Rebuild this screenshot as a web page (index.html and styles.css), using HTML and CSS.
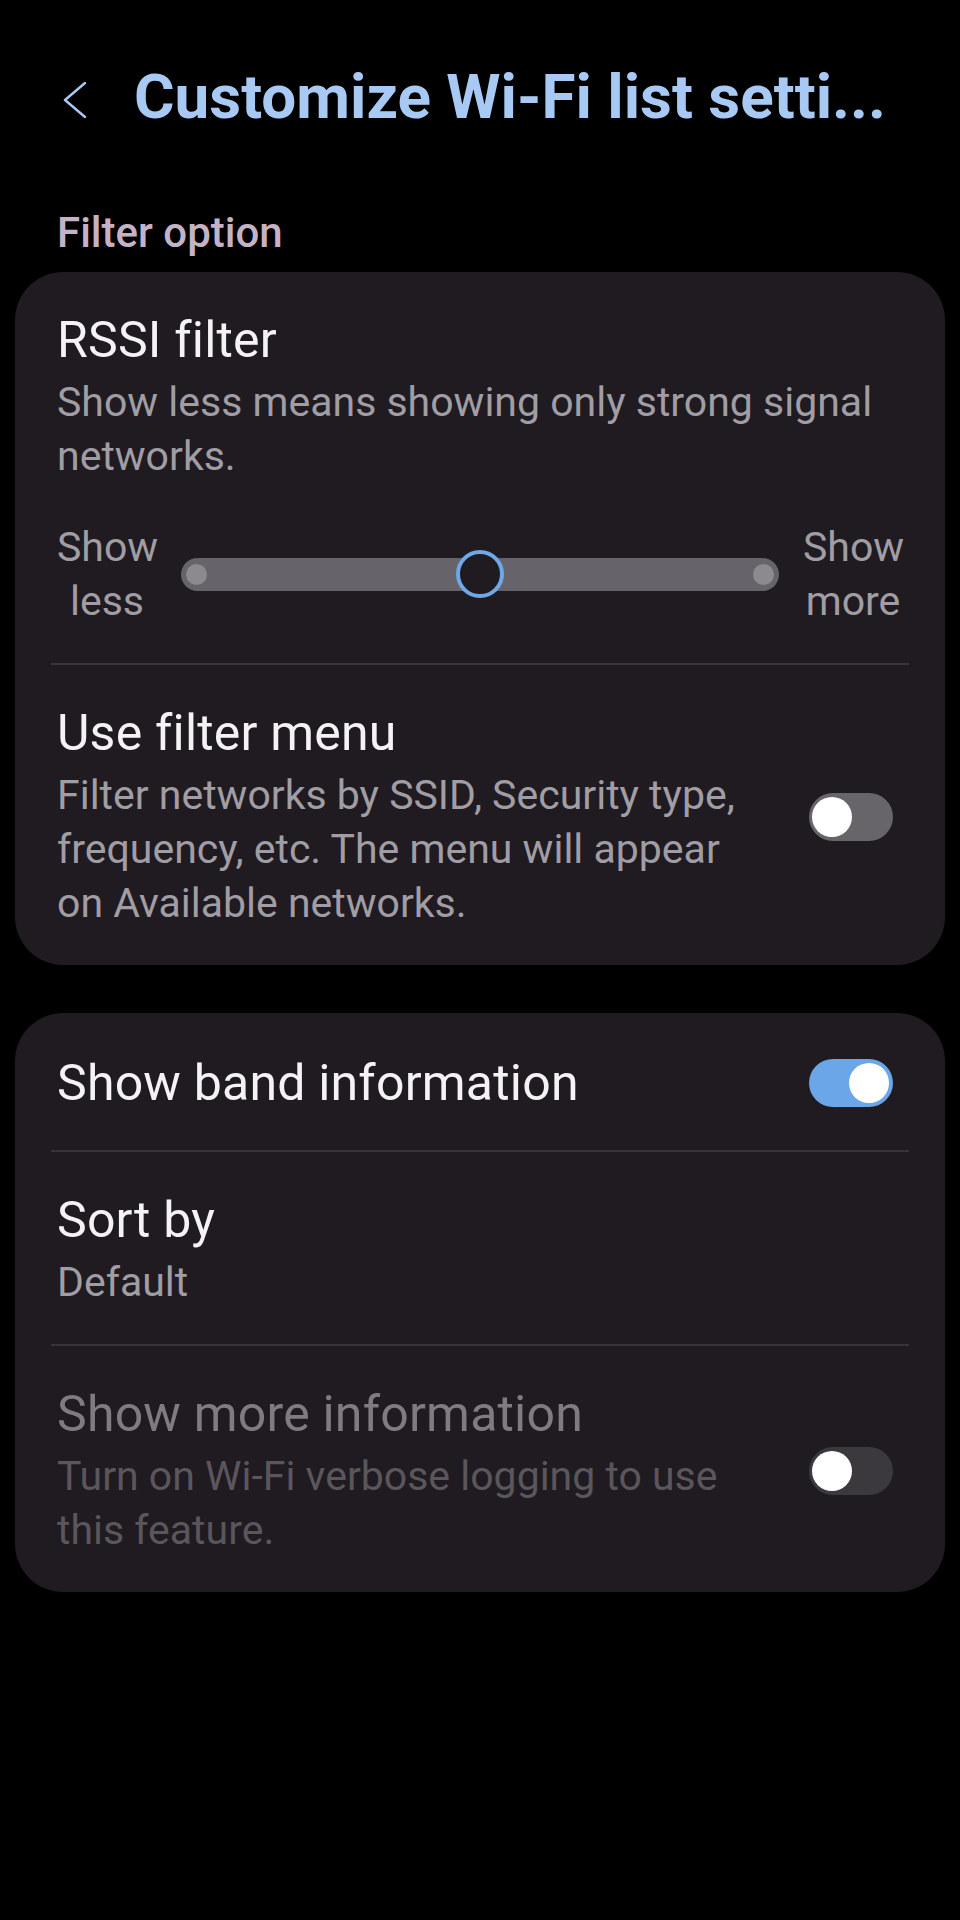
FILE: index.html
```html
<!DOCTYPE html>
<html lang="en">
  <head>
    <meta charset="utf-8" />
    <title>Customize Wi-Fi list settings</title>
    <link rel="stylesheet" href="styles.css">
  </head>

  <body>
    <div class="screen">
      <header class="appbar">
        <span class="back">
          <svg width="24" height="36" viewBox="0 0 24 36">
            <polyline points="22,1 2,18 22,35" fill="none" stroke="currentColor" stroke-width="2.4" stroke-linecap="round" stroke-linejoin="round" />
          </svg>
        </span>
        <h1 class="appbar-title">Customize Wi-Fi list setti...</h1>
      </header>

      <div class="section-label">Filter option</div>

      <div class="card">
        <div class="row">
          <div class="row-text">
            <div class="row-title">RSSI filter</div>
            <div class="row-summary">Show less means showing only strong signal networks.</div>
            <div class="slider">
              <div class="slider-label">Show less</div>
              <div class="slider-track">
                <span class="slider-dot start"></span>
                <span class="slider-dot end"></span>
                <span class="slider-thumb"></span>
              </div>
              <div class="slider-label">Show more</div>
            </div>
          </div>
        </div>

        <div class="row">
          <div class="row-text">
            <div class="row-title">Use filter menu</div>
            <div class="row-summary">Filter networks by SSID, Security type, frequency, etc. The menu will appear on Available networks.</div>
          </div>
          <span class="toggle"></span>
        </div>
      </div>

      <div class="card">
        <div class="row single">
          <div class="row-text">
            <div class="row-title">Show band information</div>
          </div>
          <span class="toggle on"></span>
        </div>

        <div class="row">
          <div class="row-text">
            <div class="row-title">Sort by</div>
            <div class="row-summary">Default</div>
          </div>
        </div>

        <div class="row disabled">
          <div class="row-text">
            <div class="row-title">Show more information</div>
            <div class="row-summary">Turn on Wi-Fi verbose logging to use this feature.</div>
          </div>
          <span class="toggle"></span>
        </div>
      </div>
    </div>
  </body>
</html>
```

FILE: styles.css
```css
body {
  margin: 0;
  background-color: #000000;
  color: #f4f2f5;
  font-family: Roboto, "Noto Sans", sans-serif;
}

.screen {
  padding: 0 15px;
}

.appbar {
  display: flex;
  align-items: center;
  gap: 47px;
  padding: 59px 0 0 48px;
}

.back {
  display: flex;
  margin-top: 6px;
  color: #a8c9f3;
}

.appbar-title {
  margin: 0;
  font-size: 62px;
  font-weight: 700;
  line-height: 76px;
  color: #a8c9f3;
  white-space: nowrap;
}

.section-label {
  margin: 72px 0 14px 42px;
  font-size: 42px;
  font-weight: 500;
  line-height: 51px;
  color: #c4b3c7;
}

.card {
  background-color: #1f1b21;
  border-radius: 48px;
  padding: 0 36px;
}

.card + .card {
  margin-top: 48px;
}

.row {
  display: flex;
  align-items: center;
  gap: 40px;
  padding: 38px 16px 35px 6px;
}

.row + .row {
  border-top: 2px solid #37343a;
}

.row.single {
  padding-top: 40px;
  padding-bottom: 37px;
}

.row-text {
  flex: 1;
  min-width: 0;
}

.row-title {
  font-size: 50px;
  line-height: 60px;
  letter-spacing: 0.2px;
}

.row-summary {
  margin-top: 5px;
  font-size: 41px;
  line-height: 54px;
  color: #a19da4;
}

.row.disabled .row-title {
  color: #7f7b81;
}

.row.disabled .row-summary {
  color: #5a565c;
}

/* slider */
.slider {
  display: flex;
  align-items: center;
  gap: 24px;
  margin: 37px -10px 0 0;
}

.slider-label {
  width: 100px;
  text-align: center;
  font-size: 41px;
  line-height: 54px;
  color: #a19da4;
}

.slider-track {
  flex: 1;
  position: relative;
  height: 33px;
  border-radius: 17px;
  background-color: #66636a;
}

.slider-dot {
  position: absolute;
  top: 6px;
  width: 21px;
  height: 21px;
  border-radius: 50%;
  background-color: #8c898f;
}

.slider-dot.start {
  left: 5px;
}

.slider-dot.end {
  right: 5px;
}

.slider-thumb {
  position: absolute;
  left: 50%;
  top: 50%;
  width: 40px;
  height: 40px;
  margin: -24px 0 0 -24px;
  border: 4px solid #6fa8e8;
  border-radius: 50%;
  background-color: #1f1b21;
}

/* switches */
.toggle {
  flex: none;
  position: relative;
  width: 84px;
  height: 48px;
  border-radius: 24px;
  background-color: #67646a;
}

.toggle::after {
  content: "";
  position: absolute;
  top: 4px;
  left: 3px;
  width: 40px;
  height: 40px;
  border-radius: 50%;
  background-color: #ffffff;
}

.toggle.on {
  background-color: #6ba6e8;
}

.toggle.on::after {
  left: auto;
  right: 4px;
}

.row.disabled .toggle {
  background-color: #3c393e;
}
```
